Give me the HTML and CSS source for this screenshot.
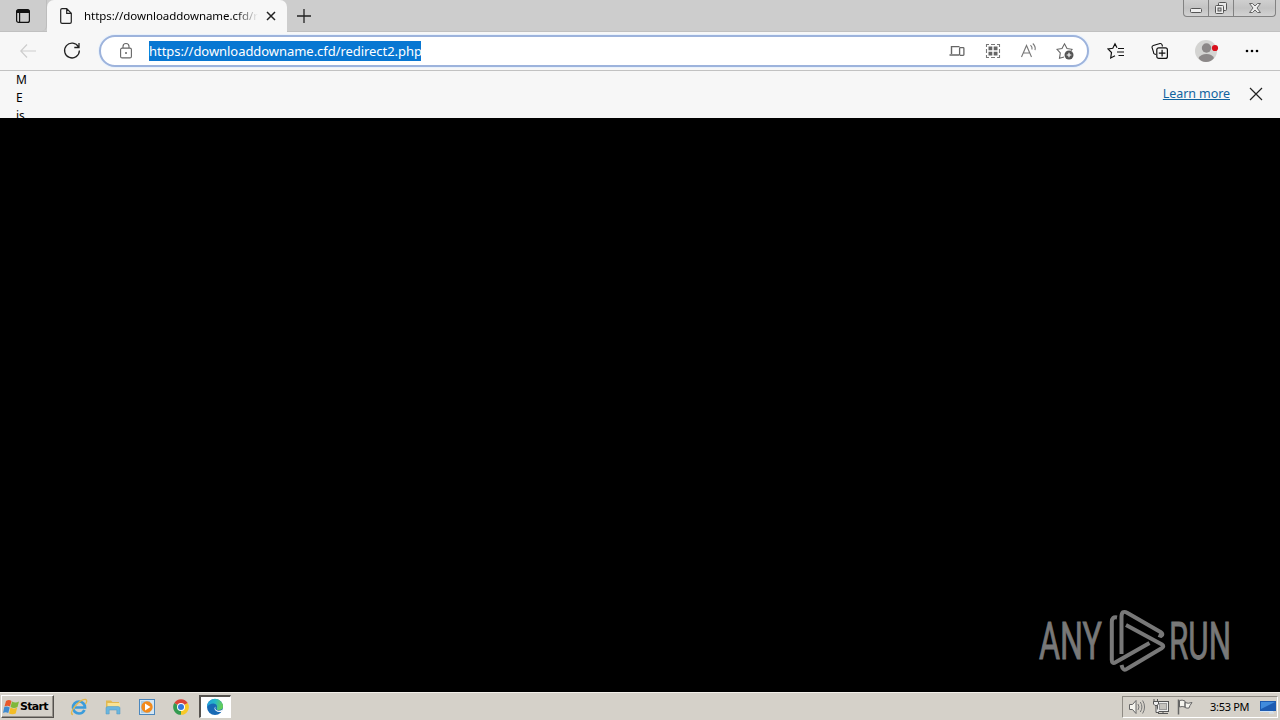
FILE: index.html
```html
<!DOCTYPE html>
<html lang="en">
<head>
<meta charset="utf-8">
<title>Browser</title>
<link rel="stylesheet" href="styles.css">
</head>
<body>
<div class="desktop">
  <header class="tabs">
    <div class="tab-menu">
      <svg width="16" height="16" viewBox="0 0 16 16"><rect x="1.6" y="1.6" width="12.8" height="12.8" rx="2" fill="none" stroke="#111" stroke-width="1.2"/><path d="M1.5 5V3.2Q1.5 1.5 3.2 1.5H12.8Q14.5 1.5 14.5 3.2V5Z" fill="#111"/><path d="M4.6 4V14" stroke="#111" stroke-width="1.2"/></svg>
    </div>
    <div class="tab">
      <svg width="14" height="18" viewBox="0 0 14 18"><path d="M1.7 3Q1.7 1.6 3.1 1.6H7.7L12.3 6.3V15Q12.3 16.4 10.9 16.4H3.1Q1.7 16.4 1.7 15ZM7.7 1.8V6.4H12.2" fill="none" stroke="#222" stroke-width="1.2"/></svg>
      <span class="tab-title">https://downloaddowname.cfd/redirect2.php</span>
      <svg width="12" height="12" viewBox="0 0 12 12"><path d="M2 2L10 10M10 2L2 10" stroke="#222" stroke-width="1.5"/></svg>
    </div>
    <svg class="new-tab" width="16" height="16" viewBox="0 0 16 16"><path d="M8 1V15M1 8H15" stroke="#222" stroke-width="1.3"/></svg>
    <div class="window-buttons">
      <span class="wb wb-min"><svg width="14" height="14" viewBox="0 0 14 14"><rect x="1.5" y="7.5" width="11" height="4" rx="1" fill="#eee" stroke="#555"/></svg></span>
      <span class="wb wb-max"><svg width="14" height="14" viewBox="0 0 14 14"><rect x="4.5" y="1.5" width="8" height="8" rx="1" fill="#e8e8e8" stroke="#555"/><rect x="1.5" y="4.500" width="8" height="8" rx="1" fill="#eee" stroke="#555"/><rect x="4" y="7" width="3" height="3" fill="#ccc" stroke="#555"/></svg></span>
      <span class="wb wb-close"><svg width="14" height="14" viewBox="0 0 14 14"><path d="M1.500 2.500H4.500L7 5L9.500 2.500H12.500L9 7L12.500 11.500H9.500L7 9L4.500 11.500H1.500L5 7Z" fill="#eee" stroke="#666"/></svg></span>
    </div>
  </header>

  <nav class="toolbar">
    <svg class="back" width="18" height="18" viewBox="0 0 18 18"><path d="M17 9H2M8 2.500L1.800 9L8 15.500" fill="none" stroke="#cdcdcd" stroke-width="1.2"/></svg>
    <svg class="reload" width="18" height="18" viewBox="0 0 18 18"><path d="M15.500 5A7.400 7.400 0 1 0 16.400 8.600M16 1V5.500H11.300" fill="none" stroke="#222" stroke-width="1.300"/></svg>
    <div class="address">
      <svg class="lock" width="14" height="18" viewBox="0 0 14 18"><rect x="1.600" y="6.100" width="10.800" height="9.800" rx="1.500" fill="none" stroke="#666" stroke-width="1.100"/><path d="M4 6V4.500A3 3 0 0 1 10 4.500V6" fill="none" stroke="#666" stroke-width="1.100"/><circle cx="7" cy="11" r="1" fill="#666"/></svg>
      <span class="url">https://downloaddowname.cfd/redirect2.php</span>
      <div class="address-icons">
        <svg width="18" height="18" viewBox="0 0 18 18"><path d="M3.500 12V4.600H11.500M1.500 13H11" fill="none" stroke="#666" stroke-width="1.400"/><rect x="11.600" y="5.600" width="4.300" height="7.800" rx=".8" fill="none" stroke="#666" stroke-width="1.300"/></svg>
        <svg width="18" height="18" viewBox="0 0 18 18"><path d="M2.500 5V2.500H5M13 2.500H15.500V5M15.500 13V15.500H13M5 15.500H2.500V13M7 2.500H11M7 15.500H11M2.500 7V11M15.500 7V11" fill="none" stroke="#777" stroke-width="1.100"/><path d="M4.500 4.500H8.300V8.300H4.500ZM9.700 4.500H13.500V8.300H9.700ZM4.500 9.700H8.300V13.500H4.500ZM9.700 9.700H13.500V13.500H9.700Z" fill="#666"/></svg>
        <svg width="18" height="18" viewBox="0 0 18 18"><path d="M1.500 15L6.500 3.500L11.500 15M3.300 11H9.700M10.500 3.200Q12.500 5 12 7.500M12.800 1.500Q16 4.500 15 8.200" fill="none" stroke="#777" stroke-width="1.100"/></svg>
        <svg width="18" height="18" viewBox="0 0 18 18"><path d="M8 15L3.500 16.300L4.300 11L1 7.300L6 6.500L8.500 1.800L11 6.500L16 7.300L15 8.600" fill="none" stroke="#666" stroke-width="1.100"/><circle cx="13" cy="13" r="4.500" fill="#555"/><path d="M13 10.700V15.300M10.700 13H15.300" stroke="#fff" stroke-width="1.100"/></svg>
      </div>
    </div>
    <div class="actions">
      <svg width="18" height="18" viewBox="0 0 18 18"><path d="M10 5.800L8 1.800L5.800 6.300L1 7L4.500 10.500L3.700 16L8 13.800M11 6.500H17M10 10H17M11.500 13.500H17" fill="none" stroke="#111" stroke-width="1.200"/></svg>
      <svg width="18" height="18" viewBox="0 0 18 18"><path d="M5 12.500L3.500 12Q2.300 11.500 2.500 10L1 5.500Q.8 4 2.300 3.500L9 1.500Q10.500 1.200 11 2.700L11.500 4.500" fill="none" stroke="#111" stroke-width="1.100"/><rect x="5.800" y="5.800" width="10.600" height="10.600" rx="2" fill="#f7f7f7" stroke="#111" stroke-width="1.200"/><path d="M11.100 7.800V14.400M7.800 11.100H14.400" stroke="#111" stroke-width="1.200"/></svg>
      <svg width="24" height="24" viewBox="0 0 24 24"><circle cx="11" cy="12" r="11" fill="#d4d4d2"/><circle cx="11.500" cy="9" r="4.700" fill="#8c8888"/><path d="M3.500 19Q6 15 11.500 15T19 19Q16 23 11 23T3.500 19Z" fill="#8c8888"/><circle cx="20" cy="9" r="3.100" fill="#d9101c"/></svg>
      <svg class="more" width="18" height="18" viewBox="0 0 18 18"><circle cx="4" cy="9" r="1.300"/><circle cx="9" cy="9" r="1.300"/><circle cx="14" cy="9" r="1.300"/></svg>
    </div>
  </nav>

  <section class="notice">
    <div class="notice-text">M<br>E<br>is</div>
    <a class="learn">Learn more</a>
    <svg width="14" height="14" viewBox="0 0 14 14"><path d="M1 1L13 13M13 1L1 13" stroke="#222" stroke-width="1.200"/></svg>
  </section>

  <main class="page">
    <svg class="watermark" width="200" height="70" viewBox="0 0 200 70">
      <g fill="#787878" stroke="#787878" stroke-width=".9" font-family="Roboto, sans-serif" font-size="52">
        <text x="3" y="54" textLength="63" lengthAdjust="spacingAndGlyphs">ANY</text>
        <text x="133" y="54" textLength="62" lengthAdjust="spacingAndGlyphs">RUN</text>
      </g>
      <g fill="none" stroke="#787878" stroke-width="4" stroke-linejoin="round">
        <path d="M81 12.500Q75.800 11.500 75.800 17V55Q75.800 59.500 80 57L113.500 38"/>
        <path d="M85.500 49V12Q85.500 4.500 91.500 8L124.500 27Q128 29.500 125 31L122.500 30"/>
        <path d="M90 20L126 39.500Q128.500 41 126 43L91.500 63.500Q87 67 85.500 60"/>
      </g>
    </svg>
  </main>

  <footer class="taskbar">
    <div class="start">
      <svg width="17" height="16" viewBox="0 0 17 16"><path d="M3 2Q6 0 8.500 2L7 7.500Q4.500 6 1.500 7.500Z" fill="#e8582a"/><path d="M9 2.500Q12.500 4.500 16 2.500L14.500 8Q11 9.800 7.500 8Z" fill="#7fb83b"/><path d="M1.300 8Q4 7 6.700 8.500L5.300 14Q2.500 12.500 0 14Z" fill="#3f8bd0"/><path d="M7.500 8.500Q11 10.800 14.200 8.500L12.700 14.500Q9.500 16 6 14.500Z" fill="#f3bd26"/></svg>
      <span>Start</span>
    </div>
    <div class="launch">
      <svg width="18" height="18" viewBox="0 0 18 18"><path d="M14.500 12Q12.800 15.500 9 15.500A6 6 0 1 1 15 9.500H5" fill="none" stroke="#3b9cdb" stroke-width="2.700"/><path d="M3 16.500Q-.5 16 4 9.500Q11 1 15.500 1.500Q18 2 15.500 6" fill="none" stroke="#e3b84d" stroke-width="1.300"/></svg>
      <svg width="18" height="18" viewBox="0 0 18 18"><path d="M2 2.500H7L8.500 4H15V12H2Z" fill="#e2b950"/><path d="M3.500 5H16V12H3.500Z" fill="#f9e394"/><path d="M2 16V10Q2 8.500 4 8.500H14Q16 8.500 16 10V16H12.800V12H5.200V16Z" fill="#69b6df" stroke="#5197bd" stroke-width=".5"/></svg>
      <svg width="18" height="18" viewBox="0 0 18 18"><rect x="1.500" y="1.500" width="15" height="15" fill="#d4e6f3" stroke="#4b87bd"/><rect x="3" y="3" width="9" height="12" fill="#a9cce6"/><circle cx="9" cy="9" r="5.700" fill="#f28a1b"/><path d="M7 5.500L12.500 9L7 12.500Z" fill="#fff"/></svg>
      <svg width="18" height="18" viewBox="0 0 18 18"><path d="M9 9L2.240 5.100A7.800 7.800 0 0 1 15.760 5.100Z" fill="#dc4437"/><path d="M9 9L15.760 5.100A7.800 7.800 0 0 1 9 16.800Z" fill="#f8c928"/><path d="M9 9L9 16.800A7.800 7.800 0 0 1 2.240 5.100Z" fill="#349b50"/><circle cx="9" cy="9" r="4" fill="#fff"/><circle cx="9" cy="9" r="3" fill="#3478dc"/></svg>
    </div>
    <div class="running">
      <svg width="18" height="18" viewBox="0 0 18 18"><defs><linearGradient id="sea" x1="0" y1="0" x2="1" y2=".2"><stop offset="0" stop-color="#1f9be0"/><stop offset=".55" stop-color="#27b9c5"/><stop offset="1" stop-color="#63ce59"/></linearGradient></defs><circle cx="9" cy="9" r="8" fill="#1769b5"/><path d="M1 9A8 8 0 0 1 17 8.500Q17 12 12.500 12Q10 12 10.800 10Q12 6 7.500 5.500Q3 5.500 1 9Z" fill="url(#sea)"/><path d="M9.500 8.500Q8.500 10.500 10 12Q12.500 13.700 17 11.500L15.500 14Q11.500 14.500 9.500 12.500Q7.500 10.500 9.500 8.500Z" fill="#fff"/></svg>
    </div>
    <div class="tray">
      <svg width="18" height="18" viewBox="0 0 18 18"><path d="M1.500 6.500H4.500L8 2.500V15.500L4.500 11.500H1.500Z" fill="#f5f4ee" stroke="#666"/><path d="M10 6Q12 9 10 12M12.300 4Q15.500 9 12.300 14M14.600 2.500Q18.500 9 14.600 15.500" fill="none" stroke="#777"/></svg>
      <svg width="18" height="18" viewBox="0 0 18 18"><rect x="5.500" y="3.500" width="11" height="10" fill="#eee" stroke="#555"/><rect x="7.500" y="5.500" width="7" height="6" fill="#c5c3be" stroke="#999"/><path d="M6 15.500H16M11 13.500V15.500" stroke="#555"/><path d="M2 1V4M5.500 1V4M1.500 3.500H6.500V6L5 7.500H3L1.500 6ZM4 8V14.500H7" fill="#eee" stroke="#555"/></svg>
      <svg width="18" height="18" viewBox="0 0 18 18"><path d="M3.500 2.500Q6 1.500 9 3V9Q6 8 3.500 9ZM9 4.500Q12 6 16 4.500L14 7.500L13 10Q11 10.500 9 9.500Z" fill="#f5f4ee" stroke="#666"/><path d="M2.500 1.500V16.500" stroke="#666" stroke-width="1.500"/></svg>
      <span class="clock">3:53 PM</span>
      <svg width="18" height="18" viewBox="0 0 18 18"><path d="M1 3H17V13H1Z" fill="#1d5bb1"/><path d="M2 4H16L2 11Z" fill="#418bdc"/><path d="M1 13.500H14M10 15H15" stroke="#d4e6f7"/></svg>
    </div>
  </footer>
</div>
</body>
</html>
```

FILE: styles.css
```css
* { box-sizing: border-box; }
body { margin: 0; font-family: "Noto Sans", sans-serif; color: #000; overflow: hidden; }
svg { display: block; flex: none; }
.desktop { width: 1280px; height: 720px; display: flex; flex-direction: column; background: #000; }
.tabs { height: 32px; flex: none; display: flex; background: #cdcdcd; border-bottom: 1px solid #c0c0c0; }
.tab-menu { width: 47px; display: flex; justify-content: center; align-items: center; border-right: 1px solid #bdbdbd; border-bottom-right-radius: 5px; }
.tab { width: 240px; height: 32px; padding: 0 9px 0 12px; display: flex; align-items: center; background: #f7f7f7; border-radius: 7px 7px 0 0; }
.tab-title { width: 174px; margin: 0 7px 2px 11px; overflow: hidden; white-space: nowrap; font-size: 11.5px; letter-spacing: -0.05px; -webkit-mask-image: linear-gradient(90deg, #000 87%, transparent); mask-image: linear-gradient(90deg, #000 87%, transparent); }
.new-tab { margin: 8px 0 0 9px; }
.window-buttons { width: 93px; height: 17px; margin-left: auto; margin-right: 4px; display: flex; border: 1px solid #828282; border-top: 0; border-radius: 0 0 4px 4px; background: linear-gradient(#cfcfcf, #c3c3c3 50%, #d2d2d2); }
.wb { display: flex; align-items: center; justify-content: center; border-right: 1px solid #828282; }
.wb-min, .wb-max { width: 25px; }
.wb-close { flex: 1; border: 0; }
.toolbar { height: 39px; flex: none; display: flex; align-items: center; padding-left: 19px; background: #f7f7f7; border-bottom: 1px solid #c2c2c2; }
.reload { margin-left: 26px; }
.address { width: 990px; height: 32px; margin-left: 18px; display: flex; align-items: center; padding: 0 13px 0 18px; border: 2px solid #9db3dc; border-radius: 16px; background: #fff; box-shadow: 0 0 0 1px #e9f2fc; }
.url { width: 272px; height: 20px; margin-left: 16px; line-height: 20px; background: #0877d2; color: #fff; font-size: 13px; letter-spacing: -0.05px; white-space: nowrap; }
.address-icons { display: flex; gap: 18px; margin-left: auto; }
.actions { display: flex; align-items: center; margin-left: 18px; gap: 26px; }
.more { margin-left: -2px; }
.notice { height: 47px; flex: none; display: flex; align-items: center; padding-left: 16px; background: #f7f7f7; overflow: hidden; }
.notice-text { align-self: flex-start; font-size: 12px; line-height: 18px; }
.learn { margin: 0 19px 3px auto; color: #11639f; font-size: 12.5px; letter-spacing: -0.08px; text-decoration: underline; }
.notice svg { margin: 0 17px 2px 0; }
.page { flex: 1; display: flex; align-items: flex-end; justify-content: flex-end; padding: 0 44px 17px 0; }
.taskbar { height: 28px; flex: none; display: flex; align-items: center; padding: 1px 2px 1px 1px; background: #d5d1c9; border-top: 1px solid #f1eee8; }
.start { width: 53px; height: 23px; display: flex; align-items: center; padding-left: 1px; border: 1px solid; border-color: #fff #55524e #55524e #fff; box-shadow: inset -1px -1px #96928b; font: bold 11px "DejaVu Sans", sans-serif; letter-spacing: -0.7px; }
.launch { display: flex; gap: 16px; margin-left: 16px; }
.running { width: 32px; height: 23px; margin-left: 9px; display: flex; align-items: center; justify-content: center; padding-right: 2px; background: #fff; border: 1px solid; border-width: 2px 1px 1px 2px; border-color: #55524e #fff #fff #55524e; }
.tray { width: 156px; height: 22px; margin-left: auto; display: flex; align-items: center; padding-left: 5px; border: 1px solid; border-color: #8f8b84 #fff #fff #8f8b84; }
.tray svg + svg { margin-left: 6px; }
.clock { width: 41px; margin: 0 9px 0 16px; font-size: 11px; letter-spacing: -0.3px; white-space: nowrap; }
```
